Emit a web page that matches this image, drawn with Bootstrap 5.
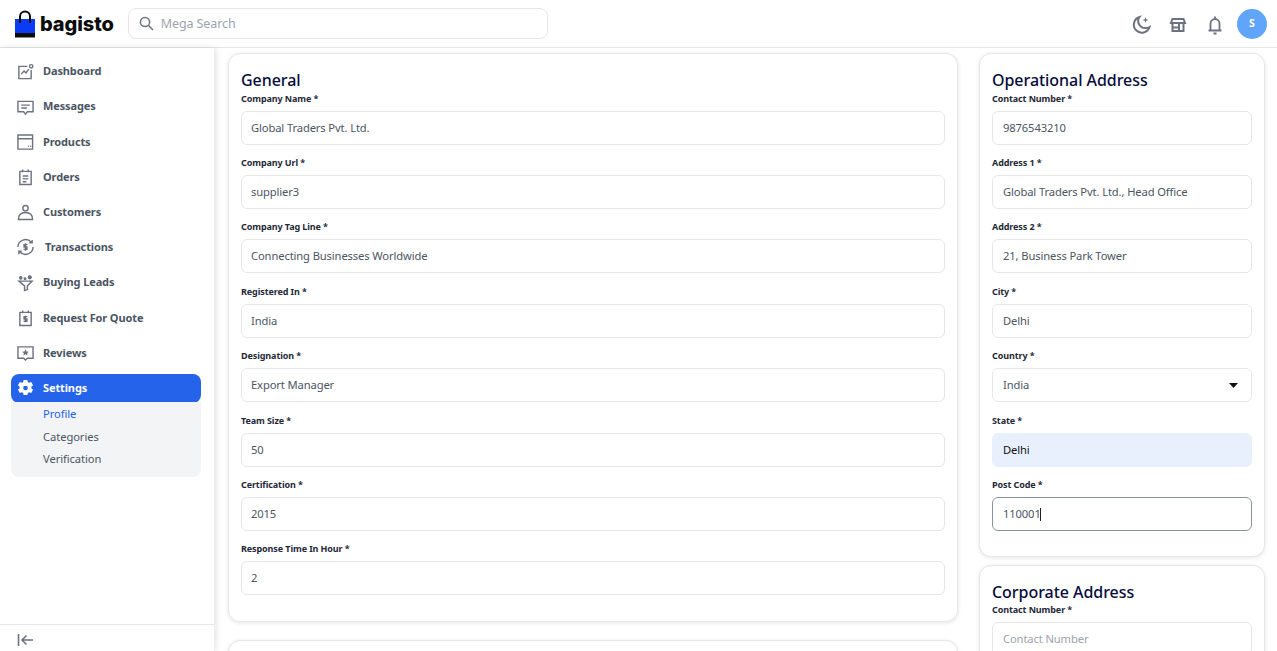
<!DOCTYPE html>
<html lang="en">
<head>
<meta charset="utf-8">
<title>Profile</title>
<link rel="stylesheet" href="https://cdn.jsdelivr.net/npm/bootstrap@5.3.0/dist/css/bootstrap.min.css">
<style>
html,body{height:651px;overflow:hidden;background:#fff}
body{font-family:"Noto Sans","Liberation Sans",sans-serif;color:#4b5563}
.top-bar{height:48px;border-bottom:1px solid #e5e7eb;padding:0 10px 0 15px}
.logo-name{font-family:"Inter",sans-serif;font-weight:800;font-size:20px;color:#0b0b0b;line-height:24px;margin-left:5px;letter-spacing:-.1px}
.search-box{width:420px;height:31px;margin-left:14px;border:1px solid #e5e7eb;border-radius:8px;padding-left:10px;color:#9ca3af;font-size:12.5px;gap:7px;letter-spacing:-.1px}
.search-box span{padding-top:1px}
.top-actions{gap:13px}
.top-actions svg{display:block}
.avatar-dot{width:30px;height:30px;border-radius:50%;background:#60a5fa;color:#fff;font-size:10.5px;font-weight:700;margin-left:-3px}
.page-wrap{height:603px}
.side-panel{width:215px;flex:none;background:#fff;box-shadow:1px 0 6px rgba(0,0,0,.12);border-right:1px solid #eee;z-index:2}
.side-list{padding:9px 13px 0 11px}
.side-link{display:flex;align-items:center;height:29px;margin-bottom:6.2px;padding-left:6px;color:#4b5563;font-size:11px;font-weight:700;text-decoration:none;letter-spacing:-.12px}
.side-link svg{width:17px;height:18px;flex:none;margin-right:9px}
.side-link.is-active{background:#2563eb;color:#fff;border-radius:8px;margin-bottom:0}
.side-sub{background:#f3f4f6;border-radius:0 0 8px 8px;margin-top:-1px;padding:1.4px 0 6px 32px;height:75px;font-size:11.2px;letter-spacing:-.08px}
.side-sub a{display:block;color:#4b5563;text-decoration:none;height:22.5px;line-height:22px}
.side-sub a.is-current{color:#2563eb}
.side-foot{height:27px;border-top:1px solid #e5e7eb;padding:3px 0 0 17px}
.main-area{flex:1;min-width:0;padding:5px 11px 0 13px;overflow:hidden;gap:21px}
.left-col{width:730px;flex:none}
.right-col{width:286px;flex:none}
.panel-box{border:1px solid #e5e7eb;border-radius:12px;box-shadow:0 1px 4px rgba(0,0,0,.1);padding:12px;background:#fff}
.panel-gap-a{margin-top:18.5px}
.panel-gap-b{margin-top:7.3px}
.panel-title{font-size:16px;font-weight:500;line-height:26.7px;padding-top:1px;color:#060c3b;margin:0;letter-spacing:-.05px}
.field-wrap{margin-bottom:13.37px}
.field-label{display:block;font-size:9px;font-weight:700;line-height:10.5px;color:#1f2937;margin:0 0 6.5px;letter-spacing:-.1px}
.field-box.form-control,.field-box.form-select{height:34px;padding:0 10px 1px;font-size:11.2px;line-height:31px;color:#4b5563;border:1px solid #e5e7eb;border-radius:6px;box-shadow:none;letter-spacing:-.12px}
.left-col .field-box.form-control{padding-left:9px}
.field-box::placeholder{color:#9ca3af;opacity:1}
.field-box.form-select{background-image:url("data:image/svg+xml,%3Csvg xmlns='http://www.w3.org/2000/svg' width='9' height='5'%3E%3Cpath d='M0 0h9L4.5 5z' fill='%23111'/%3E%3C/svg%3E");background-position:right 13px center;background-size:9px 5px}
.field-box.is-auto{background:#e8f0fe;color:#111;border-color:#e8f0fe}
.field-box.is-focus{border-color:#8b93a1}
.caret-host{position:relative}
.caret-mark{position:absolute;left:48px;top:11px;width:1px;height:13px;background:#222}
</style>
</head>
<body>
<header class="top-bar d-flex align-items-center">
  <svg width="20" height="28" viewBox="0 0 20 28"><path d="M5 10V6.500a5 5 0 0 1 10 0V10" fill="none" stroke="#0b0b0b" stroke-width="2"/><rect y="9" width="20" height="14" fill="#0a3cf5"/><rect y="23" width="20" height="4.500" fill="#0b0b0b"/><path d="M5 9v4M15 9v4" stroke="#0b0b0b" stroke-width="2"/></svg>
  <span class="logo-name">bagisto</span>
  <div class="search-box d-flex align-items-center">
    <svg width="15" height="15" viewBox="0 0 15 15" fill="none" stroke="#6b7280" stroke-width="1.500"><circle cx="6" cy="6" r="4.600"/><path d="M9.500 9.500L14 14"/></svg>
    <span>Mega Search</span>
  </div>
  <div class="top-actions d-flex align-items-center ms-auto">
    <svg width="24" height="24" viewBox="0 0 24 24" fill="none" stroke="#6b7280" stroke-width="2"><path d="M10.500 5a8 8 0 1 0 10 10 8 8 0 0 1-4 1 7 7 0 0 1-6-11z"/><path d="M16.500 5l.8 2.200 2.200.8-2.200.8-.8 2.200-.8-2.200-2.200-.8 2.200-.8z" fill="#6b7280" stroke="none"/></svg>
    <svg width="24" height="24" viewBox="0 0 24 24" fill="none" stroke="#6b7280" stroke-width="2"><path d="M6.500 7h11l1.500 4H5zM5 11h14M6.500 12v7h11v-7M6.500 15.500H13M13 12v7"/></svg>
    <svg width="24" height="24" viewBox="0 0 24 24" fill="none" stroke="#6b7280" stroke-width="1.800"><path d="M7.500 18v-6.500a4.500 4.500 0 0 1 9 0V18M5.500 18.500h13M10.500 21.500h3M12 4.500v2"/></svg>
    <div class="avatar-dot d-flex align-items-center justify-content-center">S</div>
  </div>
</header>
<div class="page-wrap d-flex">
  <aside class="side-panel d-flex flex-column">
    <nav class="side-list flex-grow-1">
      <a class="side-link" href="#"><svg viewBox="0 0 18 18" fill="none" stroke="#6b7280" stroke-width="1.500"><path d="M11 3H2v13h13V7M4.500 11l3-3 2 2 3-4"/><circle cx="15" cy="3" r="1.800"/></svg>Dashboard</a>
      <a class="side-link" href="#"><svg viewBox="0 0 18 18" fill="none" stroke="#6b7280" stroke-width="1.500"><path d="M1 3h16v11h-6l-2 2.500L7 14H1zM4.500 7h9M4.500 10h6"/></svg>Messages</a>
      <a class="side-link" href="#"><svg viewBox="0 0 18 18" fill="none" stroke="#6b7280" stroke-width="1.500"><path d="M1 1.500h15.500v15H1zM1 5.500h15.500"/><path d="M11.500 13.500h1M14 13.500h1" stroke-width="1.500"/></svg>Products</a>
      <a class="side-link" href="#"><svg viewBox="0 0 18 18" fill="none" stroke="#6b7280" stroke-width="1.500"><path d="M3 3h12v14H3zM6 1v3M12 1v3M6 8h6M6 11h6M6 14h4"/></svg>Orders</a>
      <a class="side-link" href="#"><svg viewBox="0 0 18 18" fill="none" stroke="#6b7280" stroke-width="1.500"><circle cx="9" cy="5" r="2.800"/><path d="M1.500 17c0-5 3-7.500 7.500-7.500s7.500 2.500 7.500 7.500z"/></svg>Customers</a>
      <a class="side-link" href="#"><svg style="margin-right:10px;margin-left:-1px;width:19px" viewBox="0 0 20 18" fill="none" stroke="#6b7280" stroke-width="1.500"><path d="M2 9a8 8 0 0 1 14-5M18 9a8 8 0 0 1-14 5M14 4.500h3v-3M6 13.500H3v3"/><path d="M12 6.500H8.500v2.500h3v2.500H8M10 5v8"/></svg>Transactions</a>
      <a class="side-link" href="#"><svg viewBox="0 0 18 18" fill="none" stroke="#6b7280" stroke-width="1.500"><path d="M2 7h14l-5 5v4l-3 1v-5z"/><circle cx="4" cy="3.500" r="1.200" fill="#6b7280"/><circle cx="13.500" cy="3" r="1.500" fill="#6b7280"/><circle cx="8.500" cy="4.500" r=".8" fill="#6b7280"/></svg>Buying Leads</a>
      <a class="side-link" href="#"><svg viewBox="0 0 18 18" fill="none" stroke="#6b7280" stroke-width="1.500"><path d="M3 3h12v14H3zM6 1v3M12 1v3"/><path d="M11 7.500H7.500V10H10.500V12.500H7M9 6.500v7"/></svg>Request For Quote</a>
      <a class="side-link" href="#"><svg viewBox="0 0 18 18" fill="none" stroke="#6b7280" stroke-width="1.500"><path d="M1 2.500h16v12h-6l-2 2-2-2H1z"/><path d="M9 5l1.100 2.300 2.400.3-1.800 1.600.5 2.400L9 10.400l-2.200 1.200.5-2.400-1.800-1.600 2.400-.3z" fill="#6b7280" stroke="none"/></svg>Reviews</a>
      <a class="side-link is-active" href="#"><svg viewBox="0 0 18 18"><path fill="#fff" fill-rule="evenodd" d="M7 .5h4l.5 2.300 1.200.7 2.300-.8 2 3.400-1.800 1.600v1.600l1.800 1.600-2 3.400-2.300-.8-1.200.7-.5 2.300H7l-.5-2.300-1.200-.7-2.300.8-2-3.400 1.800-1.600V7.700L1 6.100l2-3.400 2.300.8 1.200-.7zM9 6.500a2.500 2.500 0 1 0 0 5 2.500 2.500 0 0 0 0-5z"/></svg>Settings</a>
      <div class="side-sub">
        <a class="is-current" href="#">Profile</a>
        <a href="#">Categories</a>
        <a href="#">Verification</a>
      </div>
    </nav>
    <div class="side-foot d-flex align-items-center">
      <svg width="17" height="14" viewBox="0 0 17 14" fill="none" stroke="#6b7280" stroke-width="1.600"><path d="M1.500 1v12M16 7H5M9.500 2.500L5 7l4.500 4.500"/></svg>
    </div>
  </aside>
  <main class="main-area d-flex align-items-start">
    <div class="left-col">
      <section class="panel-box">
        <h2 class="panel-title">General</h2>
        <div class="field-wrap"><label class="field-label">Company Name *</label><input class="form-control field-box" value="Global Traders Pvt. Ltd."></div>
        <div class="field-wrap"><label class="field-label">Company Url *</label><input class="form-control field-box" value="supplier3"></div>
        <div class="field-wrap"><label class="field-label">Company Tag Line *</label><input class="form-control field-box" value="Connecting Businesses Worldwide"></div>
        <div class="field-wrap"><label class="field-label">Registered In *</label><input class="form-control field-box" value="India"></div>
        <div class="field-wrap"><label class="field-label">Designation *</label><input class="form-control field-box" value="Export Manager"></div>
        <div class="field-wrap"><label class="field-label">Team Size *</label><input class="form-control field-box" value="50"></div>
        <div class="field-wrap"><label class="field-label">Certification *</label><input class="form-control field-box" value="2015"></div>
        <div class="field-wrap"><label class="field-label">Response Time In Hour *</label><input class="form-control field-box" value="2"></div>
      </section>
      <section class="panel-box panel-gap-a"><h2 class="panel-title">&nbsp;</h2></section>
    </div>
    <div class="right-col">
      <section class="panel-box">
        <h2 class="panel-title">Operational Address</h2>
        <div class="field-wrap"><label class="field-label">Contact Number *</label><input class="form-control field-box" value="9876543210"></div>
        <div class="field-wrap"><label class="field-label">Address 1 *</label><input class="form-control field-box" value="Global Traders Pvt. Ltd., Head Office"></div>
        <div class="field-wrap"><label class="field-label">Address 2 *</label><input class="form-control field-box" value="21, Business Park Tower"></div>
        <div class="field-wrap"><label class="field-label">City *</label><input class="form-control field-box" value="Delhi"></div>
        <div class="field-wrap"><label class="field-label">Country *</label><select class="form-select field-box"><option>India</option></select></div>
        <div class="field-wrap"><label class="field-label">State *</label><input class="form-control field-box is-auto" value="Delhi"></div>
        <div class="field-wrap"><label class="field-label">Post Code *</label><div class="caret-host"><input class="form-control field-box is-focus" value="110001"><span class="caret-mark"></span></div></div>
      </section>
      <section class="panel-box panel-gap-b">
        <h2 class="panel-title">Corporate Address</h2>
        <div class="field-wrap"><label class="field-label">Contact Number *</label><input class="form-control field-box" placeholder="Contact Number"></div>
      </section>
    </div>
  </main>
</div>
<script src="https://cdn.jsdelivr.net/npm/bootstrap@5.3.0/dist/js/bootstrap.bundle.min.js"></script>
</body>
</html>
